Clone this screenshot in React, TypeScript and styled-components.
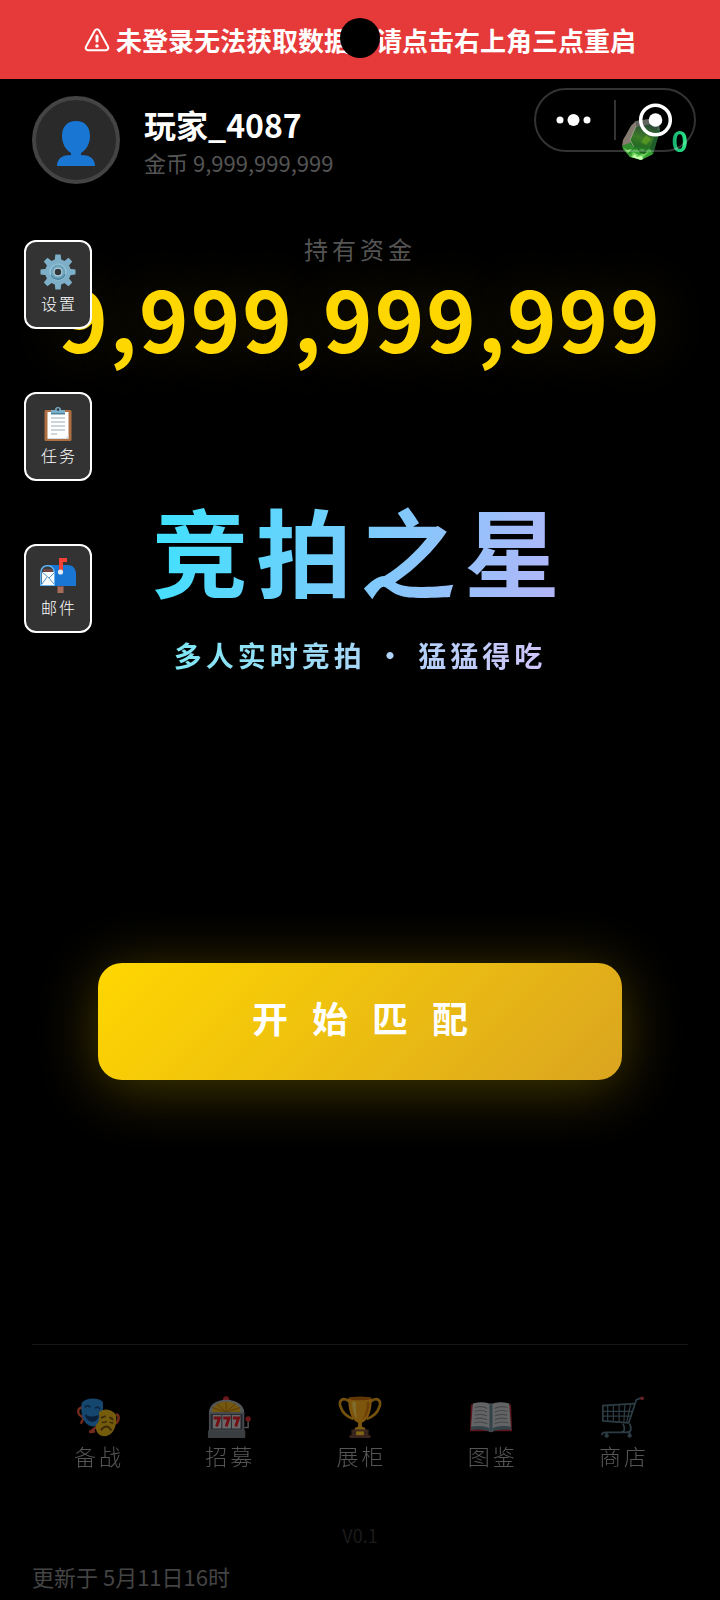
import React from 'react';
import styled, { createGlobalStyle } from 'styled-components';

const GlobalStyle = createGlobalStyle`
  *, *::before, *::after { box-sizing: border-box; }
  body {
    margin: 0;
    background: #000;
    color: #fff;
    font-family: "Noto Sans CJK SC", "Noto Sans", sans-serif;
  }
  button { font-family: inherit; cursor: pointer; }
`;

const Page = styled.div`
  position: relative;
  display: flex;
  flex-direction: column;
  min-height: 100vh;
  overflow: hidden;
  background: #000;
`;

const Banner = styled.div`
  position: relative;
  display: flex;
  align-items: center;
  justify-content: center;
  gap: 6px;
  height: 79px;
  background: #e63a3a;
  font-size: 26px;
  font-weight: 700;
  line-height: 40px;
  white-space: nowrap;
`;

const CameraHole = styled.span`
  position: absolute;
  top: 18px;
  left: 50%;
  width: 40px;
  height: 40px;
  margin-left: -20px;
  border-radius: 50%;
  background: #000;
`;

const Header = styled.header`
  position: relative;
  display: flex;
  align-items: center;
  gap: 24px;
  padding: 17px 32px 0;
`;

const Avatar = styled.div`
  display: flex;
  align-items: center;
  justify-content: center;
  width: 88px;
  height: 88px;
  padding-top: 8px;
  border: 4px solid #444;
  border-radius: 50%;
  background: #2a2a2a;
`;

const Player = styled.div`
  flex: 1;
`;

const PlayerName = styled.div`
  font-size: 32px;
  font-weight: 700;
  line-height: 44px;
`;

const PlayerCoins = styled.div`
  color: #555;
  font-size: 22px;
  line-height: 32px;
`;

const Gems = styled.div`
  display: flex;
  align-items: center;
  gap: 10px;
`;

const GemCount = styled.span`
  background: linear-gradient(90deg, #14a86c, #2cf08c);
  background-clip: text;
  -webkit-background-clip: text;
  color: transparent;
  font-size: 28px;
  font-weight: 700;
  line-height: 40px;
`;

const Capsule = styled.div`
  position: absolute;
  top: 9px;
  right: 24px;
  display: flex;
  align-items: center;
  width: 162px;
  height: 64px;
  border: 2px solid rgba(255, 255, 255, 0.2);
  border-radius: 32px;
`;

const CapsuleButton = styled.button`
  display: flex;
  flex: 1;
  align-items: center;
  justify-content: center;
  height: 100%;
  padding: 0;
  border: 0;
  background: none;
`;

const CapsuleDivider = styled.span`
  width: 2px;
  height: 40px;
  background: rgba(255, 255, 255, 0.2);
`;

const SideMenu = styled.nav`
  position: absolute;
  top: 240px;
  left: 24px;
  display: flex;
  flex-direction: column;
  gap: 63px;
`;

const SideButton = styled.button`
  display: flex;
  flex-direction: column;
  align-items: center;
  width: 68px;
  height: 89px;
  padding: 12px 0 0;
  border: 2px solid #fff;
  border-radius: 12px;
  background: #333;
  color: #fff;
`;

const SideLabel = styled.span`
  padding-left: 2px;
  font-size: 16px;
  font-weight: 300;
  letter-spacing: 2px;
  line-height: 26px;
`;

const Main = styled.main`
  display: flex;
  flex-direction: column;
  padding: 47px 32px 0;
  text-align: center;
`;

const FundLabel = styled.div`
  color: #555;
  font-size: 24px;
  letter-spacing: 4px;
  line-height: 36px;
`;

const FundAmount = styled.div`
  margin-top: 2px;
  color: #ffd700;
  font-size: 84px;
  font-weight: 700;
  letter-spacing: 2px;
  line-height: 96px;
  text-shadow: 0 0 60px rgba(255, 215, 0, 0.16);
  white-space: nowrap;
`;

const Title = styled.h1`
  align-self: center;
  margin: 124px 0 0;
  background: linear-gradient(110deg, #3be3ff, #b8b4f8);
  background-clip: text;
  -webkit-background-clip: text;
  color: transparent;
  font-size: 96px;
  font-weight: 700;
  letter-spacing: 8px;
  line-height: 120px;
  white-space: nowrap;
`;

const Subtitle = styled.p`
  align-self: center;
  margin: 26px 0 0;
  background: linear-gradient(110deg, #7ee8f4, #d0c4fa);
  background-clip: text;
  -webkit-background-clip: text;
  color: transparent;
  font-size: 28px;
  font-weight: 700;
  letter-spacing: 4px;
  line-height: 40px;
  white-space: nowrap;
`;

const MatchButton = styled.button`
  height: 117px;
  margin: 288px 66px 0;
  padding: 0 0 10px 24px;
  border: 0;
  border-radius: 24px;
  background: linear-gradient(135deg, #ffd700, #daa520);
  box-shadow: 0 8px 60px rgba(255, 215, 0, 0.28);
  color: #fff;
  font-size: 36px;
  font-weight: 700;
  letter-spacing: 24px;
  line-height: 48px;
`;

const Footer = styled.footer`
  margin-top: auto;
  padding: 0 32px 8px;
`;

const TabBar = styled.nav`
  display: flex;
  padding-top: 50px;
  border-top: 1px solid #161616;
`;

const Tab = styled.button`
  display: flex;
  flex: 1;
  flex-direction: column;
  align-items: center;
  padding: 0;
  border: 0;
  background: none;
  color: #fff;
  opacity: 0.5;
`;

const TabLabel = styled.span`
  padding-left: 3px;
  color: #aaa;
  font-size: 22px;
  font-weight: 300;
  letter-spacing: 3px;
  line-height: 32px;
`;

const Version = styled.div`
  margin-top: 50px;
  color: #1c1c1c;
  font-size: 18px;
  line-height: 28px;
  text-align: center;
`;

const Updated = styled.div`
  margin-top: 11px;
  color: #444;
  font-size: 22px;
  line-height: 32px;
`;

const WarningIcon = () => (
  <svg width="26" height="26" viewBox="0 0 26 26" fill="none" aria-hidden="true">
    <path d="M11 3.300a2.400 2.400 0 0 1 4 0l9 16.400a2.400 2.400 0 0 1-2 3.600H4a2.400 2.400 0 0 1-2-3.600z" stroke="#fff" strokeWidth="2" />
    <path d="M13 9v5" stroke="#fff" strokeWidth="3" strokeLinecap="round" />
    <circle cx="13" cy="19" r="1.800" fill="#fff" />
  </svg>
);

const PersonIcon = () => (
  <svg width="40" height="46" viewBox="0 0 40 46" aria-hidden="true">
    <path d="M20 0C11 0 6 6 6 15c0 8 4 14 9 17v2C7 34 1 37 1 45h38c0-8-6-11-14-11v-2c5-3 9-9 9-17C34 6 29 0 20 0z" fill="#1976d2" />
  </svg>
);

const GemIcon = () => (
  <svg width="40" height="44" viewBox="0 0 40 44" aria-hidden="true">
    <defs>
      <linearGradient id="gemBody" x1=".6" y1="0" x2=".35" y2="1">
        <stop offset="0" stopColor="#536259" />
        <stop offset=".4" stopColor="#2c6a35" />
        <stop offset=".75" stopColor="#2a7d28" />
        <stop offset="1" stopColor="#5cc94f" />
      </linearGradient>
      <linearGradient id="gemTable" x1=".7" y1="0" x2=".4" y2="1">
        <stop offset="0" stopColor="#284536" />
        <stop offset=".6" stopColor="#3d7c28" />
        <stop offset="1" stopColor="#1f6a22" />
      </linearGradient>
    </defs>
    <path d="M15 3l14-2 9 5 1 6-7 24-12 6-11-3-7-8 1-9L10 8z" fill="url(#gemBody)" />
    <path d="M15 3l-5 5-8 14-1 6 8-3 7-16z" fill="#857a70" />
    <path d="M15 8l15-2 6 6-7 18-16-1-4-7z" fill="url(#gemTable)" />
    <path d="M15 3l14-2 2 5-16 3z" fill="#62655f" />
    <path d="M29 1l9 5-2 6-5-6z" fill="#304e3d" />
    <path d="M29 30l7-18 3 0-7 24z" fill="#1f5c2b" />
    <path d="M1 28l8-3 4 6-5 6-6-6z" fill="#2f8d2e" />
    <path d="M8 38l5-7 16 0 3 5-12 6z" fill="#39a336" />
    <path d="M12 34l6 3 10-3-8 7-10-2z" fill="#7ee065" opacity=".8" />
    <path d="M16 30l5 3 6-3-3 6-5-1z" fill="#1c641f" />
    <path d="M25 17l5 4-5 6-5-3z" fill="#77b91d" opacity=".45" />
    <path d="M2 29l4 3 5-1-4 4z" fill="#7fdc6a" />
    <path d="M11 39l3-3 2 3 5-1 1 3-2 1z" fill="#c5ffb0" />
    <path d="M15 8L9 22l4 7" fill="none" stroke="#aaa893" strokeWidth=".8" />
  </svg>
);

const MoreIcon = () => (
  <svg width="38" height="16" viewBox="0 0 38 16" fill="#fff" aria-hidden="true">
    <circle cx="4" cy="8" r="3.500" />
    <circle cx="17.500" cy="8" r="6" />
    <circle cx="31" cy="8" r="3.500" />
  </svg>
);

const TargetIcon = () => (
  <svg width="34" height="34" viewBox="0 0 34 34" aria-hidden="true">
    <circle cx="17.500" cy="17" r="14.800" fill="none" stroke="#fff" strokeWidth="3.500" />
    <circle cx="17.500" cy="17" r="6.800" fill="#fff" />
  </svg>
);

const GearIcon = () => (
  <svg width="36" height="36" viewBox="0 0 36 36" aria-hidden="true">
    <g fill="#7db0c8">
      {[0, 45, 90, 135, 180, 225, 270, 315].map((angle) => (
        <path key={angle} d="M15.400 .5h5.200l1 8h-7.200z" transform={`rotate(${angle} 18 18)`} />
      ))}
      <circle cx="18" cy="18" r="12.800" />
    </g>
    <circle cx="18" cy="18" r="8" fill="#6fa3bc" stroke="#97c6da" strokeWidth="1.200" />
    <path d="M11 21a7.600 7.600 0 0 0 14-1" fill="none" stroke="#4f87a2" strokeWidth="1.500" />
    <circle cx="18" cy="18" r="4.600" fill="#b2d2df" />
    <circle cx="18" cy="18" r="3.300" fill="#30363a" />
  </svg>
);

const ClipboardIcon = () => (
  <svg width="36" height="36" viewBox="0 0 36 36" aria-hidden="true">
    <rect x="4.500" y="4" width="27" height="31" rx="1.500" fill="#ae7043" />
    <path d="M7.500 6h21v26h-21z" fill="#fff" />
    <path d="M28.500 29v4h-21v-1h18z" fill="#d6dde0" />
    <path d="M11 12h14M11 16h14M11 20h14M11 24h14M11 28h6" stroke="#9aabb4" strokeWidth="1" />
    <path d="M11 4h4a3 3 0 0 1 6 0h4v4H11z" fill="#79afc8" />
    <path d="M11 7h14v1.500H11z" fill="#4f839b" />
    <circle cx="18" cy="3.500" r="1.300" fill="#333" />
  </svg>
);

const MailboxIcon = () => (
  <svg width="36" height="36" viewBox="0 0 36 36" aria-hidden="true">
    <path d="M17.500 26h6v9h-6z" fill="#a66c59" />
    <path d="M17.500 26h6v3h-6z" fill="#7d4b3e" />
    <path d="M7 7h21c5 0 8 4 8 9v12H15z" fill="#1976d2" />
    <path d="M0 16C0 10 3 7 7.500 7S15 10 15 16v12H0z" fill="#64b5f6" />
    <path d="M1.500 16c0-5 2-7.500 6-7.500s6 2.500 6 7.500v10h-12z" fill="#333d46" />
    <path d="M3 11h10v3H3z" fill="#704542" />
    <path d="M2 14h12v13H2z" fill="#fafafa" />
    <path d="M2 14l7 6 5-5M2 26l5-7M14 26l-5-6" fill="none" stroke="#5798cf" strokeWidth="1" />
    <path d="M19 0h8v4h-4v11h-4z" fill="#f44336" />
    <circle cx="20.500" cy="14" r="2.600" fill="#e1eef7" />
  </svg>
);

const MasksIcon = () => (
  <svg width="44" height="44" viewBox="0 0 46 44" aria-hidden="true">
    <path d="M7 12c-5 0-6 5-3 8l4 3-3 6M42 19c4 1 3 8-1 10M22 32l-8 6 6-1" fill="none" stroke="#e45537" strokeWidth="2.500" />
    <path d="M6 7c5-5 16-6 22-1 1 12-1 24-9 26C9 32 4 22 6 7z" fill="#2b8bdc" />
    <path d="M9 12q3-4 6 0M20 13q3-3 5 1" fill="none" stroke="#174e84" strokeWidth="1.800" />
    <path d="M9 19c5 3 10 3 15 1-1 9-12 10-15-1z" fill="#123e70" />
    <path d="M24 17c6-5 14-3 18 3 1 12-3 21-11 22-8 0-11-5-10-12 3-2 4-7 3-13z" fill="#e9b81b" />
    <path d="M26 23l5-2M35 22l4 3M26 36q6-8 11 0" fill="none" stroke="#795610" strokeWidth="2" />
    <path d="M27 27q3 2 5-1M35 27q2 2 4 1" fill="none" stroke="#795610" strokeWidth="1.500" />
  </svg>
);

const SlotIcon = () => (
  <svg width="44" height="44" viewBox="0 0 46 44" aria-hidden="true">
    <circle cx="20" cy="3.500" r="3.200" fill="#d72c35" />
    <path d="M2 18C2 9 10 4 20 4s19 5 19 14z" fill="#a8adb2" />
    <path d="M5 17c1-7 7-11 15-11s15 4 15 11z" fill="#e5b01c" />
    <path d="M20 17V6M20 17L10 8M20 17L30 8M20 17L5 12M20 17l15-5" stroke="#bd7616" strokeWidth="1" />
    <path d="M2 17h37v20H2z" fill="#8a9097" />
    <path d="M4 19h33v16H4z" fill="#424a56" />
    <path d="M6 20h9v14H6zm10 0h9v14h-9zm10 0h9v14h-9z" fill="#d0d0d2" />
    <path d="M7 23h6l-3 9M17 23h6l-3 9M27 23h6l-3 9" fill="none" stroke="#e11e29" strokeWidth="3" />
    <path d="M1 36h39v8H1z" fill="#777d82" />
    <path d="M39 33h4v-8" fill="none" stroke="#9da3aa" strokeWidth="1.500" />
    <circle cx="43" cy="24" r="2.800" fill="#d72c35" />
  </svg>
);

const TrophyIcon = () => (
  <svg width="44" height="44" viewBox="0 0 46 44" aria-hidden="true">
    <path d="M12 6C5 0 0 5 3 12c2 7 7 10 13 12M34 6c7-6 12-1 9 6-2 7-7 10-13 12" fill="none" stroke="#e6a21b" strokeWidth="2.800" />
    <path d="M11 2h24c1 12-3 24-10 26v7h-4v-7C14 26 10 14 11 2z" fill="#f9aa18" />
    <ellipse cx="23" cy="2.500" rx="12" ry="2" fill="#c46d09" />
    <path d="M15 6c0 9 2 15 5 18-1-6-2-12-1-18z" fill="#ffd95a" />
    <path d="M30 6c0 9-2 15-5 19 6-4 8-11 8-19z" fill="#db7c12" />
    <path d="M17 36c0-3 3-4 6-4s6 1 6 4z" fill="#f8b324" />
    <path d="M14 35h18v6H14zM12 41h22v3H12z" fill="#73483d" />
    <path d="M19 37h8v4h-8z" fill="#ffc928" />
  </svg>
);

const BookIcon = () => (
  <svg width="44" height="44" viewBox="0 0 46 44" aria-hidden="true">
    <path d="M2 9h42l1 28H26l-3 1-3-1H1z" fill="#b42836" />
    <path d="M4 8c7-2 14-2 19 1 5-3 12-3 19-1l2 27c-8-1-16-1-21 2-5-3-13-3-21-2z" fill="#c6c8ca" />
    <path d="M2 32c9-1 16-1 21 3 5-4 12-4 21-3v3c-8 0-16 0-21 3-5-3-13-3-21-3z" fill="#66828f" />
    <path d="M21 8h4v29l-2 1-2-1z" fill="#8aa5b1" />
    <path d="M23 9v28" stroke="#48616e" strokeWidth="1" />
    <path d="M6 12q8-2 13 1M6 16q8-2 13 1M6 20q8-2 13 1M6 24q8-2 13 1M5 28q8-2 14 1M27 13q5-3 13-1M27 17q5-3 13-1M27 21q5-3 13-1M27 25q5-3 13-1M27 29q5-3 14-1" fill="none" stroke="#8c8e90" strokeWidth="1.200" />
  </svg>
);

const CartIcon = () => (
  <svg width="44" height="44" viewBox="0 0 46 44" fill="none" stroke="#5a7987" aria-hidden="true">
    <path d="M43 2l-5 2-8 24L3 26V10l33-2" strokeWidth="1.800" />
    <path d="M3 16h31M3 21h29M8 10v16M14 10v16M20 9v18M26 9l-1 18M32 9l-4 18" strokeWidth="1.300" />
    <path d="M24 29q4 8-2 9M31 29q4 9-4 9H6q-4 0-4 3M6 38h25" strokeWidth="1.800" />
    <path d="M7 38v3M31 38v3" strokeWidth="2" />
    <circle cx="7" cy="41.500" r="1.800" fill="#5a7987" />
    <circle cx="31" cy="41.500" r="1.800" fill="#5a7987" />
    <circle cx="44" cy="2.500" r="2" fill="#c9404a" stroke="none" />
  </svg>
);

const sideItems = [
  { label: '设置', Icon: GearIcon },
  { label: '任务', Icon: ClipboardIcon },
  { label: '邮件', Icon: MailboxIcon },
];

const tabs = [
  { label: '备战', Icon: MasksIcon },
  { label: '招募', Icon: SlotIcon },
  { label: '展柜', Icon: TrophyIcon },
  { label: '图鉴', Icon: BookIcon },
  { label: '商店', Icon: CartIcon },
];

export default function App() {
  return (
    <Page lang="zh-CN">
      <GlobalStyle />
      <Banner role="alert">
        <WarningIcon />
        <span>未登录无法获取数据，请点击右上角三点重启</span>
        <CameraHole />
      </Banner>
      <Header>
        <Avatar>
          <PersonIcon />
        </Avatar>
        <Player>
          <PlayerName>玩家_4087</PlayerName>
          <PlayerCoins>金币 9,999,999,999</PlayerCoins>
        </Player>
        <Gems>
          <GemIcon />
          <GemCount>0</GemCount>
        </Gems>
        <Capsule>
          <CapsuleButton type="button" aria-label="更多">
            <MoreIcon />
          </CapsuleButton>
          <CapsuleDivider />
          <CapsuleButton type="button" aria-label="关闭">
            <TargetIcon />
          </CapsuleButton>
        </Capsule>
      </Header>
      <Main>
        <FundLabel>持有资金</FundLabel>
        <FundAmount>9,999,999,999</FundAmount>
        <Title>竞拍之星</Title>
        <Subtitle>多人实时竞拍 · 猛猛得吃</Subtitle>
        <MatchButton type="button">开始匹配</MatchButton>
      </Main>
      <SideMenu>
        {sideItems.map(({ label, Icon }) => (
          <SideButton key={label} type="button">
            <Icon />
            <SideLabel>{label}</SideLabel>
          </SideButton>
        ))}
      </SideMenu>
      <Footer>
        <TabBar>
          {tabs.map(({ label, Icon }) => (
            <Tab key={label} type="button">
              <Icon />
              <TabLabel>{label}</TabLabel>
            </Tab>
          ))}
        </TabBar>
        <Version>V0.1</Version>
        <Updated>更新于 5月11日16时</Updated>
      </Footer>
    </Page>
  );
}
